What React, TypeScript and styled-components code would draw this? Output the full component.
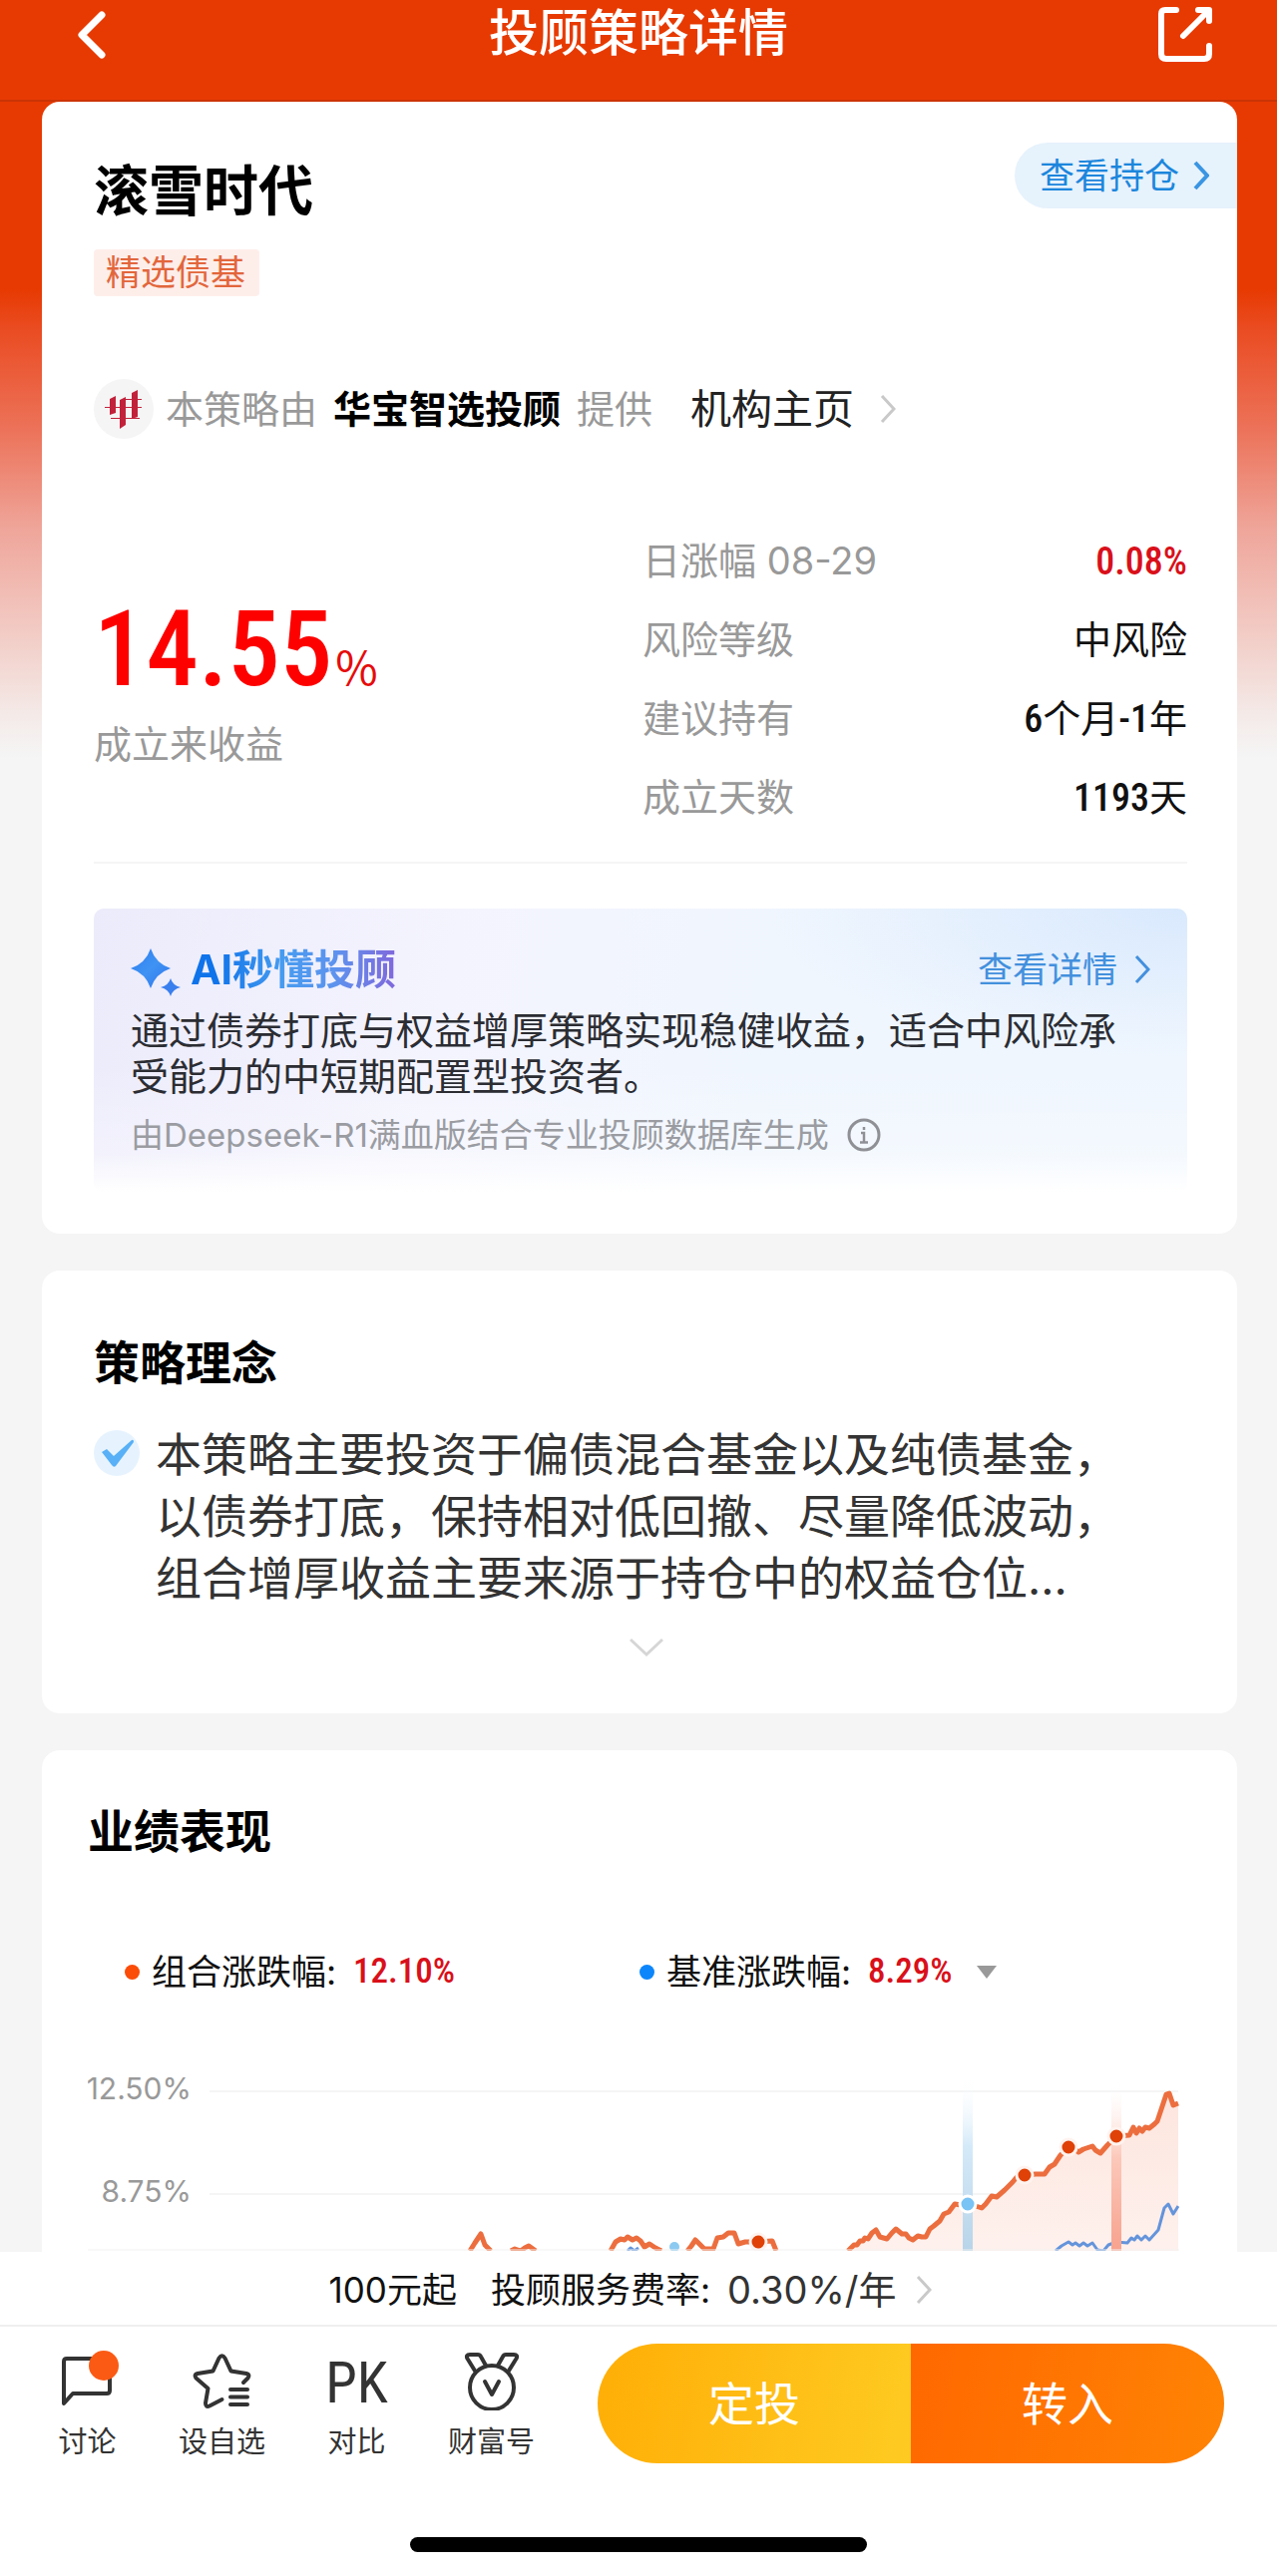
import React from "react";
import styled, { createGlobalStyle, css } from "styled-components";

const sans = `Inter, "Noto Sans CJK SC", sans-serif`;
const figures = `"Roboto Condensed", Roboto, "Noto Sans CJK SC", sans-serif`;

const GlobalStyle = createGlobalStyle`
  *, *::before, *::after { box-sizing: border-box; }
  body { margin: 0; background: #fff; font-family: ${sans}; color: #333; }
  h1, h2, p, dl, dd, dt, ul { margin: 0; padding: 0; }
  h1, h2 { font-weight: 700; }
  a { color: inherit; text-decoration: none; }
  button { padding: 0; border: 0; background: none; color: inherit; font: inherit; cursor: pointer; }
  svg { display: block; flex: none; }
`;

const Page = styled.div`
  display: flex;
  flex-direction: column;
  min-height: 100vh;
  background: linear-gradient(
      #e73a02 0, #e73a02 290px, #ea4c22 330px, #ec7259 430px, #efa59a 530px,
      #f2cac3 630px, #f4ebe9 720px, #f5f5f5 760px
    );
`;

const Header = styled.header`
  display: grid;
  grid-template-columns: 1fr auto 1fr;
  align-items: center;
  padding: 0 60px 34px;
  border-bottom: 2px solid #cb3406;
  color: #fff;
`;

const HeaderTitle = styled.h1`
  font-size: 50px;
  line-height: 66px;
  font-weight: 500;
`;

const HeaderButton = styled.button<{ $end?: boolean }>`
  justify-self: ${(p) => (p.$end ? "end" : "start")};
`;

const Main = styled.main`
  display: flex;
  flex: 1;
  flex-direction: column;
  gap: 37px;
  padding: 0 40px 0 42px;
`;

const Card = styled.section<{ $open?: boolean }>`
  background: #fff;
  border-radius: ${(p) => (p.$open ? "18px 18px 0 0" : "18px")};
`;

const SummaryCard = styled(Card)`
  padding: 41px 50px 42px 52px;
`;

const SummaryTop = styled.div`
  display: flex;
  align-items: flex-start;
  justify-content: space-between;
`;

const StrategyName = styled.h2`
  padding-top: 18px;
  color: #000;
  font-size: 55px;
  line-height: 60px;
`;

const Tag = styled.span`
  display: block;
  width: fit-content;
  margin-top: 29px;
  padding: 0 14px 0 12px;
  border-radius: 4px;
  background: #feeeea;
  color: #e2663c;
  font-size: 35px;
  line-height: 47px;
`;

const HoldingsLink = styled.a`
  display: flex;
  align-items: center;
  gap: 14px;
  height: 66px;
  margin-right: -50px;
  padding: 0 28px 0 25px;
  border-radius: 33px 0 0 33px;
  background: #e6f2fc;
  color: #1c86dc;
  font-size: 35px;
  line-height: 50px;
`;

const Provider = styled.div`
  display: flex;
  align-items: center;
  margin-top: 83px;
  color: #999;
  font-size: 38px;
  line-height: 60px;
`;

const ProviderLogo = styled.svg`
  margin-right: 12px;
`;

const ProviderName = styled.strong`
  margin: 0 16px;
  color: #000;
  font-weight: 700;
`;

const ProviderLink = styled.a`
  display: flex;
  align-items: center;
  gap: 26px;
  margin-left: 38px;
  color: #222;
  font-size: 41px;
`;

const Stats = styled.div`
  display: grid;
  grid-template-columns: 550px 1fr;
  margin-top: 82px;
  padding-bottom: 26px;
  border-bottom: 2px solid #f5f5f5;
`;

const Gain = styled.div`
  padding-top: 85px;
`;

const GainValue = styled.p`
  display: flex;
  align-items: baseline;
  gap: 3px;
  height: 90px;
  color: #fd0100;
  font-family: ${figures};
  font-size: 105px;
  font-weight: 500;
  line-height: 90px;
`;

const GainUnit = styled.span`
  font-family: "Noto Sans CJK SC", sans-serif;
  font-size: 46px;
  font-weight: 400;
  line-height: 60px;
  color: #e60b0b;
`;

const GainLabel = styled.p`
  margin-top: 22px;
  color: #999;
  font-size: 38px;
  line-height: 54px;
`;

const Facts = styled.dl`
  display: flex;
  flex-direction: column;
`;

const Fact = styled.div`
  display: flex;
  align-items: center;
  justify-content: space-between;
  height: 79px;
  font-size: 38px;
  line-height: 60px;
`;

const FactName = styled.dt`
  color: #999;
`;

const FactValue = styled.dd<{ $up?: boolean }>`
  color: #111;
  ${(p) => p.$up && css`color: #d9101a;`}
`;

const Num = styled.b`
  font-family: ${figures};
  font-size: 38px;
  font-weight: 500;
  line-height: 50px;
`;

const AiPanel = styled.div`
  margin-top: 45px;
  padding: 37px;
  border-radius: 10px;
  background:
    linear-gradient(rgba(255, 255, 255, 0) 55%, rgba(255, 255, 255, 0.3) 86%, #fff 100%),
    radial-gradient(ellipse 420px 150px at 100% 0, #d9e9fd, rgba(217, 233, 253, 0)),
    linear-gradient(100deg, #ecebfb 0, #f4f4fe 32%, #f0f6fe 60%, #eff6fe 100%);
`;

const AiHead = styled.div`
  display: flex;
  align-items: center;
  height: 48px;
`;

const AiTitle = styled.h2`
  margin: 0 auto 0 10px;
  background: linear-gradient(90deg, #0f73ea 12%, #479cf0 45%, #5d93ee 70%, #8068dc 100%);
  background-clip: text;
  -webkit-background-clip: text;
  color: transparent;
  font-size: 41px;
  line-height: 48px;
`;

const AiLink = styled.a`
  display: flex;
  align-items: center;
  gap: 17px;
  color: #4390dd;
  font-size: 35px;
  line-height: 48px;
`;

const AiText = styled.p`
  margin-top: 14px;
  color: #2b2d33;
  font-size: 38px;
  line-height: 46px;
`;

const AiSource = styled.p`
  display: flex;
  align-items: center;
  gap: 18px;
  margin-top: 16px;
  color: #9a9ca2;
  font-size: 33px;
  line-height: 40px;
`;

const IdeaCard = styled(Card)`
  padding: 62px 100px 46px 52px;
`;

const SectionTitle = styled.h2`
  color: #000;
  font-size: 46px;
  line-height: 60px;
`;

const Idea = styled.div`
  display: grid;
  grid-template-columns: 46px 1fr;
  column-gap: 16px;
  margin-top: 31px;
`;

const IdeaMark = styled.svg`
  margin-top: 7px;
`;

const IdeaText = styled.p`
  color: #333;
  font-size: 46px;
  line-height: 62px;
`;

const Expand = styled.button`
  display: flex;
  grid-column: 2;
  align-items: center;
  justify-content: center;
  height: 40px;
  margin-top: 19px;
`;

const PerformanceCard = styled(Card)`
  flex: 1;
  padding: 51px 58px 0 46px;
`;

const Legend = styled.div`
  display: grid;
  grid-template-columns: 516px 1fr;
  margin-top: 86px;
  padding-left: 37px;
  color: #111;
  font-size: 35px;
  line-height: 50px;
`;

const LegendItem = styled.div`
  display: flex;
  align-items: center;
`;

const Dot = styled.i<{ $color: string }>`
  width: 15px;
  height: 15px;
  margin-right: 12px;
  border-radius: 50%;
  background: ${(p) => p.$color};
`;

const LegendValue = styled(Num)`
  margin-left: 17px;
  color: #d9101a;
  font-size: 35px;
`;

const LegendButton = styled.button`
  display: flex;
  align-items: center;
`;

const Caret = styled.i`
  margin-left: 24px;
  border: 10px solid transparent;
  border-top: 13px solid #999;
  border-bottom: 0;
`;

const Chart = styled.svg`
  width: 100%;
  height: auto;
  margin-top: 57px;
`;

const AxisText = styled.text`
  fill: #999;
  font-family: ${sans};
  font-size: 30px;
`;

const Footer = styled.footer`
  background: #fff;
`;

const FeeBar = styled.a`
  display: flex;
  align-items: center;
  justify-content: center;
  height: 75px;
  padding: 2px 16px 0 0;
  border-bottom: 2px solid #efefef;
  color: #111;
  font-size: 35px;
  line-height: 50px;
`;

const FeeLabel = styled.span`
  margin-left: 34px;
`;

const FeeRate = styled.span`
  margin: 0 20px 0 17px;
  color: #333;
  font-size: 38px;
`;

const Toolbar = styled.div`
  display: flex;
  align-items: flex-start;
  padding: 17px 53px 74px 20px;
`;

const Tools = styled.nav`
  display: grid;
  flex: none;
  grid-template-columns: repeat(4, 135px);
  margin-right: 39px;
`;

const Tool = styled.button`
  display: flex;
  flex-direction: column;
  align-items: center;
  padding-top: 7px;
  color: #333;
  font-size: 29px;
  line-height: 40px;
`;

const ToolGlyph = styled.span`
  display: flex;
  align-items: center;
  justify-content: center;
  height: 60px;
  margin-bottom: 12px;
`;

const PkMark = styled.span`
  padding-top: 6px;
  font-family: ${figures};
  font-size: 57px;
  line-height: 60px;
`;

const Actions = styled.div`
  display: flex;
  flex: 1;
  height: 120px;
  overflow: hidden;
  border-radius: 60px;
`;

const Action = styled.button<{ $from: string; $to: string }>`
  flex: 1;
  background: linear-gradient(100deg, ${(p) => p.$from}, ${(p) => p.$to});
  color: #fff;
  font-size: 46px;
  line-height: 120px;
`;

const HomeIndicator = styled.div`
  width: 458px;
  height: 15px;
  margin: 0 auto 24px;
  border-radius: 8px;
  background: #000;
`;

const Chevron = ({ color, width = 3 }: { color: string; width?: number }) => (
  <svg width="16" height="30" viewBox="0 0 16 30" fill="none" stroke={color} strokeWidth={width} aria-hidden="true">
    <path d="M2 2 14 15 2 28" />
  </svg>
);

const facts: { name: string; value: React.ReactNode; up?: boolean }[] = [
  { name: "日涨幅 08-29", value: <Num>0.08%</Num>, up: true },
  { name: "风险等级", value: "中风险" },
  { name: "建议持有", value: <><Num>6</Num>个月<Num>-1</Num>年</> },
  { name: "成立天数", value: <><Num>1193</Num>天</> },
];

const strategyMain =
  "762,198 768,192 771,192 774,188 777,188 779,185 782,186 786,180 790,177 794,184 801,186 806,180 810,176 816,181 820,181 823,185 827,187 832,183 836,184 840,184 844,176 848,173 854,168 858,161 863,159 869,151 875,152 882,151 890,153 896,155 900,151 906,143 911,144 919,137 927,129 932,123 939,122 950,121 959,121 964,114 969,111 975,102 983,94 989,96 993,99 998,96 1007,93 1010,97 1015,100 1022,92 1031,83 1044,82 1048,74 1051,80 1054,75 1057,78 1060,74 1064,75 1069,71 1072,68 1077,53 1081,41 1084,40 1088,52 1093,50";

const strategyPieces = [
  "383,198 388,190 394,181 398,192 404,198",
  "424,198 428,196 434,198 438,195 442,193 449,198",
  "524,198 529,189 534,186 538,187 541,184 546,187 550,185 554,188 558,194 563,191 569,195 575,198",
  "601,198 605,193 609,187 613,191 618,196 627,196 631,185 637,184 642,180 648,180 652,191 659,189 672,189 686,188 690,198",
];

const benchmark =
  "970,198 976,193 983,189 987,192 990,190 994,193 998,190 1002,193 1007,190 1012,197 1018,198 1023,192 1031,189 1042,190 1046,185 1049,187 1052,183 1056,187 1060,183 1064,187 1073,177 1079,155 1083,151 1088,161 1093,153";

const marks = [[672, 189], [939, 122], [983, 94], [1031, 83]];

const PerformanceChart = () => (
  <Chart viewBox="0 0 1094 198" role="img" aria-label="组合与基准涨跌幅走势">
    <defs>
      <linearGradient id="area" x1="0" y1="0" x2="0" y2="1">
        <stop offset="0" stopColor="#fde5de" />
        <stop offset="1" stopColor="#fef1ed" />
      </linearGradient>
      <linearGradient id="buy" x1="0" y1="0" x2="0" y2="1">
        <stop offset="0" stopColor="#fff" stopOpacity="0" />
        <stop offset="0.4" stopColor="#d5eaf9" />
        <stop offset="1" stopColor="#b8d4e8" />
      </linearGradient>
      <linearGradient id="sell" x1="0" y1="0" x2="0" y2="1">
        <stop offset="0" stopColor="#fff" stopOpacity="0" />
        <stop offset="0.45" stopColor="#fcc8ba" />
        <stop offset="1" stopColor="#f7a28e" />
      </linearGradient>
    </defs>
    <path d="M122 38H1093M122 141H1093" stroke="#f5f5f5" strokeWidth="2" />
    <AxisText x="104" y="46" textAnchor="end">12.50%</AxisText>
    <AxisText x="104" y="149" textAnchor="end">8.75%</AxisText>
    <polygon points={`${strategyMain} 1093,198`} fill="url(#area)" />
    <rect x="877" y="22" width="10" height="176" fill="url(#buy)" />
    <g fill="none" strokeLinejoin="round">
      <polyline points={strategyMain} stroke="#ec6e3f" strokeWidth="5" />
      {strategyPieces.map((p) => (
        <polyline key={p} points={p} stroke="#ec6e3f" strokeWidth="5" />
      ))}
      <polyline points={benchmark} stroke="#6494db" strokeWidth="3" />
      <polyline points="541,198 544,195 548,198 552,195" stroke="#6494db" strokeWidth="3" />
    </g>
    <rect x="1026" y="28" width="10" height="170" fill="url(#sell)" />
    <circle cx="588" cy="194" r="5" fill="#8ccaf2" />
    <circle cx="882" cy="151" r="8" fill="#79c3f5" stroke="#fff" strokeWidth="3" />
    {marks.map(([x, y]) => (
      <circle key={x} cx={x} cy={y} r="8" fill="#df4106" stroke="#fff3ef" strokeWidth="3" />
    ))}
    <path d="M0 197H1094" stroke="#f1f1f1" strokeWidth="1" />
  </Chart>
);

const tools: { label: string; glyph: React.ReactNode }[] = [
  {
    label: "讨论",
    glyph: (
      <svg width="64" height="60" viewBox="0 0 64 60" fill="none" stroke="#333" strokeWidth="4" strokeLinejoin="round" aria-hidden="true">
        <path d="M8 53V11q0-3 3-3h40q3 0 3 3v29q0 3-3 3H17z" />
        <circle cx="48" cy="15" r="15" fill="#fb5a14" stroke="none" />
      </svg>
    ),
  },
  {
    label: "设自选",
    glyph: (
      <svg width="64" height="60" viewBox="0 0 64 60" fill="none" stroke="#333" strokeWidth="4" strokeLinecap="round" strokeLinejoin="round" aria-hidden="true">
        <path d="M53 32 57.500 27.500Q60 24 56 23L40.500 20.500 34.500 7.500Q31.500 3 28.500 7.500L22.500 20.500 7 23Q3 24 5.500 27.500L17.500 38 15 52.500Q15 57.500 19 55.500L31.500 49" />
        <path d="M40 39H57M40 46.500H57M40 54H57" />
      </svg>
    ),
  },
  { label: "对比", glyph: <PkMark>PK</PkMark> },
  {
    label: "财富号",
    glyph: (
      <svg width="64" height="60" viewBox="0 0 64 60" fill="none" stroke="#333" strokeWidth="4" strokeLinecap="round" strokeLinejoin="round" aria-hidden="true">
        <circle cx="32" cy="37" r="22" />
        <path d="M15.500 21 7.500 8Q5.500 4 10 4H18Q20 4 21 6L26 15M48.500 21 56.500 8Q58.500 4 54 4H46Q44 4 43 6L38 15" />
        <path d="M25 31 32 44 39 31" />
      </svg>
    ),
  },
];

export default function App() {
  return (
    <>
      <GlobalStyle />
      <Page>
        <Header>
          <HeaderButton aria-label="返回">
            <svg width="50" height="60" viewBox="0 0 50 60" fill="none" stroke="#fff" strokeWidth="7" strokeLinecap="round" strokeLinejoin="round">
              <path d="M42 12 22 32 42 52" />
            </svg>
          </HeaderButton>
          <HeaderTitle>投顾策略详情</HeaderTitle>
          <HeaderButton $end aria-label="分享">
            <svg width="60" height="62" viewBox="0 0 60 62" fill="none" stroke="#fff" strokeWidth="6" strokeLinecap="round" strokeLinejoin="round">
              <path d="M19 8H8Q4 8 4 12V52Q4 57 9 57H47Q52 57 52 52V44" />
              <path d="M41 8H52V19M51 9 26 34" />
            </svg>
          </HeaderButton>
        </Header>

        <Main>
          <SummaryCard>
            <SummaryTop>
              <div>
                <StrategyName>滚雪时代</StrategyName>
                <Tag>精选债基</Tag>
              </div>
              <HoldingsLink href="#holdings">
                查看持仓
                <Chevron color="#3a95e2" width={4} />
              </HoldingsLink>
            </SummaryTop>

            <Provider>
              <ProviderLogo width="60" height="60" viewBox="0 0 60 60" aria-hidden="true">
                <circle cx="30" cy="30" r="30" fill="#f5f5f5" />
                <g fill="#c2213b">
                  <path d="M16 20 22 17V34L16 36zM26 21 32 18V46L26 50zM38 14 44 11V38L38 40z" />
                  <path d="M11 28H48V29H11zM30 20H48V21H30zM17 39H46V40H17z" />
                </g>
              </ProviderLogo>
              本策略由
              <ProviderName>华宝智选投顾</ProviderName>
              提供
              <ProviderLink href="#institution">
                机构主页
                <Chevron color="#c9c9c9" />
              </ProviderLink>
            </Provider>

            <Stats>
              <Gain>
                <GainValue>
                  14.55<GainUnit>%</GainUnit>
                </GainValue>
                <GainLabel>成立来收益</GainLabel>
              </Gain>
              <Facts>
                {facts.map((f) => (
                  <Fact key={f.name}>
                    <FactName>{f.name}</FactName>
                    <FactValue $up={f.up}>{f.value}</FactValue>
                  </Fact>
                ))}
              </Facts>
            </Stats>

            <AiPanel>
              <AiHead>
                <svg width="50" height="54" viewBox="0 0 50 54" aria-hidden="true">
                  <defs>
                    <linearGradient id="spark" x1="0" y1="0" x2="1" y2="1">
                      <stop offset="0" stopColor="#2c7cf0" />
                      <stop offset="0.5" stopColor="#3f93f3" />
                      <stop offset="1" stopColor="#2f74ee" />
                    </linearGradient>
                  </defs>
                  <path d="M20 6Q25 21 40 26 25 31 20 46 15 31 0 26 15 21 20 6z" fill="url(#spark)" />
                  <path d="M40 36Q42 43 50 45 42 47 40 54 38 47 30 45 38 43 40 36z" fill="#3a7fee" />
                </svg>
                <AiTitle>AI秒懂投顾</AiTitle>
                <AiLink href="#ai-detail">
                  查看详情
                  <Chevron color="#4390dd" />
                </AiLink>
              </AiHead>
              <AiText>通过债券打底与权益增厚策略实现稳健收益，适合中风险承受能力的中短期配置型投资者。</AiText>
              <AiSource>
                由Deepseek-R1满血版结合专业投顾数据库生成
                <svg width="34" height="34" viewBox="0 0 34 34" fill="none" stroke="#8e9096" strokeWidth="3" aria-hidden="true">
                  <circle cx="17" cy="17" r="15" />
                  <path d="M14 15H17V24M13 24.500H21M17 9V12" strokeWidth="2.500" />
                </svg>
              </AiSource>
            </AiPanel>
          </SummaryCard>

          <IdeaCard>
            <SectionTitle>策略理念</SectionTitle>
            <Idea>
              <IdeaMark width="46" height="46" viewBox="0 0 46 46" aria-hidden="true">
                <circle cx="23" cy="23" r="23" fill="#e6f3fe" />
                <path d="M8 22 13 19 20 26 38 10Q40 9 40 12L22 36Q20 38 18 35z" fill="#58b0f6" />
              </IdeaMark>
              <IdeaText>
                本策略主要投资于偏债混合基金以及纯债基金，以债券打底，保持相对低回撤、尽量降低波动，组合增厚收益主要来源于持仓中的权益仓位...
              </IdeaText>
              <Expand aria-label="展开">
                <svg width="34" height="20" viewBox="0 0 34 20" fill="none" stroke="#d6d6d6" strokeWidth="3" aria-hidden="true">
                  <path d="M1 2 17 17 33 2" />
                </svg>
              </Expand>
            </Idea>
          </IdeaCard>

          <PerformanceCard $open>
            <SectionTitle>业绩表现</SectionTitle>
            <Legend>
              <LegendItem>
                <Dot $color="#fb4c08" />
                组合涨跌幅:<LegendValue>12.10%</LegendValue>
              </LegendItem>
              <LegendButton aria-haspopup="listbox">
                <Dot $color="#0d86fb" />
                基准涨跌幅:<LegendValue>8.29%</LegendValue>
                <Caret />
              </LegendButton>
            </Legend>
            <PerformanceChart />
          </PerformanceCard>
        </Main>

        <Footer>
          <FeeBar href="#fees">
            100元起
            <FeeLabel>投顾服务费率:</FeeLabel>
            <FeeRate>0.30%/年</FeeRate>
            <Chevron color="#c9c9c9" />
          </FeeBar>
          <Toolbar>
            <Tools>
              {tools.map((t) => (
                <Tool key={t.label}>
                  <ToolGlyph>{t.glyph}</ToolGlyph>
                  {t.label}
                </Tool>
              ))}
            </Tools>
            <Actions>
              <Action $from="#ffae06" $to="#fecb22">定投</Action>
              <Action $from="#ff6800" $to="#ff8404">转入</Action>
            </Actions>
          </Toolbar>
          <HomeIndicator />
        </Footer>
      </Page>
    </>
  );
}
